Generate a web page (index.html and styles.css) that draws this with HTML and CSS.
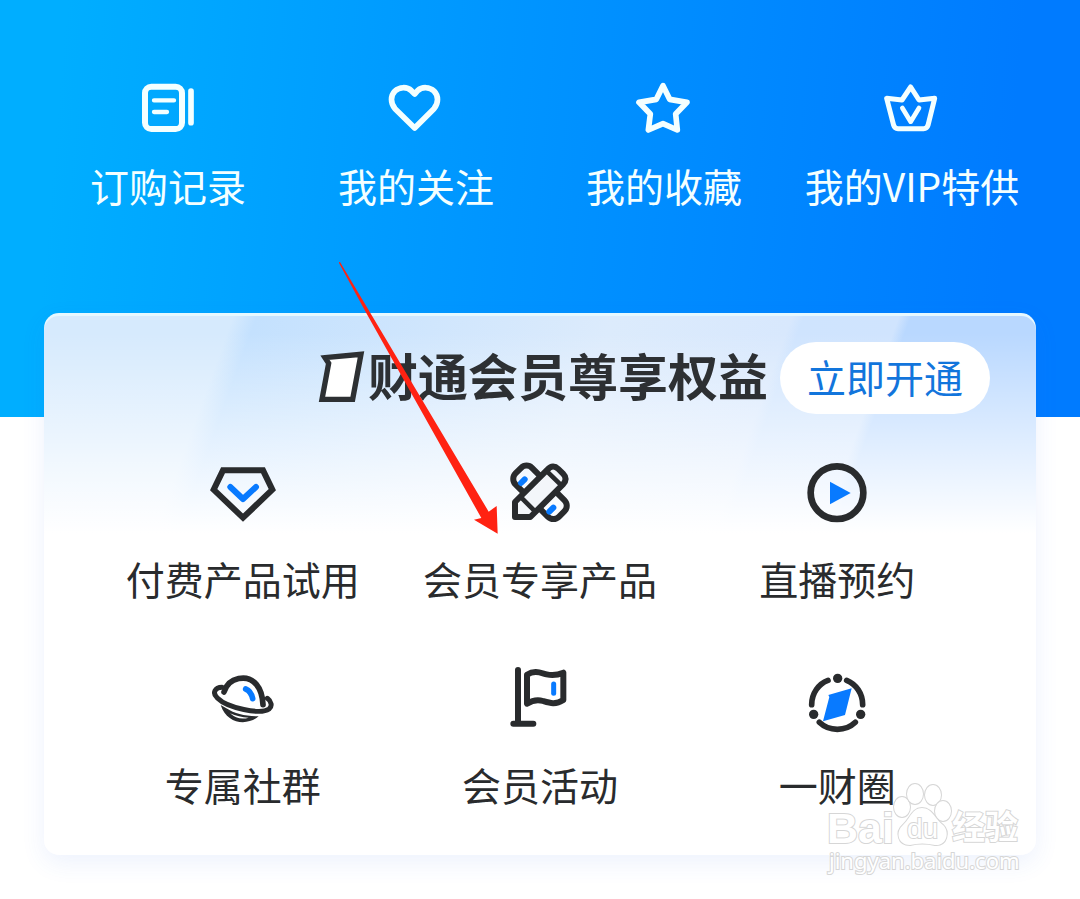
FILE: index.html
```html
<!DOCTYPE html>
<html lang="zh-CN">
<head>
<meta charset="utf-8">
<meta name="viewport" content="width=device-width, initial-scale=1">
<title>会员中心</title>
<link rel="stylesheet" href="styles.css">
</head>
<body>
<main class="page">
  <header class="hero">
    <nav class="shortcuts">
      <a class="shortcut" href="#orders">
        <svg class="shortcut-icon" viewBox="60 30 168 168" aria-hidden="true">
          <rect x="75" y="50" width="111" height="127" rx="19" stroke-width="18"/>
          <path d="M102 91H162M102 126H141" stroke-width="13"/>
          <path d="M213 63V158" stroke-width="17"/>
        </svg>
        <span>订购记录</span>
      </a>
      <a class="shortcut" href="#follows">
        <svg class="shortcut-icon" viewBox="804 30 168 168" aria-hidden="true">
          <path d="M884 72L874 62C860 49 838 51 825 63C811 77 811 100 825 116L884 174L942 116C956 100 956 77 942 63C929 51 907 49 893 62Z" stroke-width="17"/>
        </svg>
        <span>我的关注</span>
      </a>
      <a class="shortcut" href="#favorites">
        <svg class="shortcut-icon" viewBox="48 30 168 168" aria-hidden="true">
          <path d="M129 47L149 88L201 97L167 132L172 180L129 161L85 180L91 132L57 97L109 88Z" stroke-width="17"/>
        </svg>
        <span>我的收藏</span>
      </a>
      <a class="shortcut" href="#vip">
        <svg class="shortcut-icon" viewBox="792 30 168 168" aria-hidden="true">
          <path d="M872 51L897 90L944 85L924 166Q921 176 911 176H834Q824 176 821 166L800 85L846 90Z" stroke-width="15"/>
          <path d="M847 114L872 155L897 114" stroke-width="14"/>
        </svg>
        <span>我的VIP特供</span>
      </a>
    </nav>
  </header>

  <section class="card">
    <div class="card-head">
      <h1 class="card-title">
        <svg class="title-icon" viewBox="54 300 144 168" aria-hidden="true">
          <path d="M75 323L183 313L158 448H66L86 340Z" fill="#fff" stroke="#2d3033" stroke-width="16"/>
        </svg>
        <span class="title-text">财通会员尊享权益</span>
      </h1>
      <button class="open-button" type="button">立即开通</button>
    </div>
    <div class="benefits">
      <a class="benefit" href="#trial">
        <svg class="benefit-icon" viewBox="51 54 216 216" aria-hidden="true">
          <path class="dark" d="M99 91H219L247 149L159 233L71 149Z" stroke-width="18" stroke-linejoin="miter"/>
          <path class="blue" d="M121 141L159 177L198 141" stroke-width="18"/>
        </svg>
        <span>付费产品试用</span>
      </a>
      <a class="benefit" href="#exclusive">
        <svg class="benefit-icon" viewBox="42 54 216 216" aria-hidden="true">
          <g class="dark" stroke-width="18">
            <rect x="58" y="122" width="184" height="70" rx="23" transform="rotate(45 150 157)"/>
            <path fill="#f3f6fa" d="M75 231V186L173 88Q189 71 205 87L219 101Q235 117 219 133L121 231Z"/>
            <path d="M94 173L133 212M171 94L211 133" stroke-width="14"/>
          </g>
          <path class="blue" d="M93 129L104 118M178 215L190 203" stroke-width="18"/>
        </svg>
        <span>会员专享产品</span>
      </a>
      <a class="benefit" href="#live">
        <svg class="benefit-icon" viewBox="33 54 216 216" aria-hidden="true">
          <circle class="dark" cx="141" cy="158" r="79" stroke-width="20"/>
          <path d="M120 125L182 159L120 193Z" fill="#087aff"/>
        </svg>
        <span>直播预约</span>
      </a>
      <a class="benefit" href="#community">
        <svg class="benefit-icon" viewBox="51 27 216 216" aria-hidden="true">
          <path class="dark" d="M102 111C116 65 173 57 199 88Q217 109 219 149" stroke-width="17"/>
          <path class="dark" d="M96 97C76 97 65 113 82 129C112 159 212 180 237 162C248 153 244 139 232 130" stroke-width="15"/>
          <path d="M92 150L109 160C135 177 166 184 206 184C173 213 111 209 92 150Z" fill="#292b2d"/>
          <path d="M120 175Q146 187 176 188Q145 197 120 175Z" fill="#fff"/>
          <path class="blue" d="M167 102Q183 108 188 131" stroke-width="17"/>
        </svg>
        <span>专属社群</span>
      </a>
      <a class="benefit" href="#events">
        <svg class="benefit-icon" viewBox="42 27 216 216" aria-hidden="true">
          <path class="dark" d="M84 45V205M70 206H130" stroke-width="18"/>
          <path class="dark" d="M111 59C134 44 153 54 170 58Q194 64 220 53V135C197 150 179 144 159 138Q135 131 111 146Z" stroke-width="18"/>
          <path class="blue" d="M191 87V115" stroke-width="15"/>
        </svg>
        <span>会员活动</span>
      </a>
      <a class="benefit" href="#circle">
        <svg class="benefit-icon" viewBox="33 27 216 216" aria-hidden="true">
          <path class="dark" d="M65 149C65 115 86 86 114 76M170 76C199 88 218 116 218 149M88 202C117 230 167 230 196 202" stroke-width="17"/>
          <g fill="#292b2d"><circle cx="143" cy="70" r="14"/><circle cx="71" cy="178" r="14"/><circle cx="212" cy="178" r="14"/></g>
          <path d="M115 120L185 100L165 180L99 199L118 126Z" fill="#087aff"/>
        </svg>
        <span>一财圈</span>
      </a>
    </div>
    <svg class="watermark" viewBox="820 778 210 100" role="img" aria-label="Baidu 经验 jingyan.baidu.com">
      <g class="mark">
        <ellipse cx="902" cy="807" rx="8" ry="10"/>
        <ellipse cx="915" cy="794" rx="8" ry="10"/>
        <ellipse cx="933" cy="795" rx="8" ry="10"/>
        <ellipse cx="943" cy="811" rx="8" ry="10"/>
        <path d="M922 808C912 808 910 819 903 825C895 832 898 845 910 845Q922 842 935 845C947 846 950 832 943 825C935 819 932 808 922 808Z"/>
        <text class="mark-logo" x="827" y="843">Bai</text>
        <text class="mark-du" x="907" y="838">du</text>
        <text class="mark-cjk" x="952" y="839">经验</text>
        <text class="mark-url" x="829" y="869">jingyan.baidu.com</text>
      </g>
    </svg>
  </section>

  <svg class="pointer" viewBox="117 35 477 816" aria-hidden="true">
    <path d="M116 36L120 35L566 784L590 767L593 850L522 808L544 803L200 190Z" fill="#ff2212"/>
  </svg>
</main>
</body>
</html>
```
FILE: styles.css
```css
* { box-sizing: border-box; }

body {
  margin: 0;
  background: #fff;
  color: #292b2d;
  font-family: "Noto Sans CJK SC", sans-serif;
  font-size: 39px;
  line-height: 56px;
}

a { color: inherit; text-decoration: none; }

.page { position: relative; padding-bottom: 44px; }

.hero {
  padding: 80px 44px 204px;
  background: linear-gradient(95deg, #00aeff 6%, #0095ff 46%, #007bff 92%);
  color: #f4ffff;
}

.shortcuts { display: grid; grid-template-columns: repeat(4, 1fr); }

.shortcut, .benefit {
  display: flex;
  flex-direction: column;
  align-items: center;
  gap: 20px;
  white-space: nowrap;
}

.shortcut { gap: 21px; }

.shortcut-icon {
  width: 56px;
  height: 56px;
  fill: none;
  stroke: #f4ffff;
  stroke-linecap: round;
  stroke-linejoin: round;
}

.card {
  position: relative;
  margin: -104px 44px 0;
  padding: 29px 46px 40px;
  border-radius: 15px;
  background:
    linear-gradient(180deg, transparent 20px, #fff 220px),
    linear-gradient(110deg, #d6eafd 16%, #c4e1fe 18%, #dcebfc 48%, #d8e8fd 63%, #cfe4fe 64%, #d0e4fe 72%, #b9d8ff 73%);
  box-shadow: inset 0 3px 0 #e6f8ff, 0 8px 24px rgba(55, 110, 230, 0.09);
}

.card-head {
  display: flex;
  align-items: center;
  justify-content: flex-end;
  gap: 12px;
}

.card-title {
  display: flex;
  align-items: center;
  gap: 2px;
  margin: 0;
  color: #2d3033;
  font-size: 50px;
  font-weight: 700;
  line-height: 64px;
  white-space: nowrap;
}

.title-icon { width: 48px; height: 56px; }
.title-text { padding-bottom: 8px; }

.open-button {
  width: 210px;
  height: 72px;
  padding: 0 0 4px;
  border: 0;
  border-radius: 36px;
  background: #fff;
  color: #1275dc;
  font: inherit;
}

.benefits {
  display: grid;
  grid-template-columns: repeat(3, 1fr);
  row-gap: 58px;
  margin: 44px 4px 0;
  padding-bottom: 3px;
}

.benefit-icon {
  width: 72px;
  height: 72px;
  fill: none;
  stroke-linecap: round;
  stroke-linejoin: round;
}

.dark { stroke: #292b2d; }
.blue { stroke: #087aff; }

.watermark {
  position: absolute;
  right: 6px;
  bottom: -23px;
  width: 210px;
  height: 100px;
}

.mark {
  fill: #fff;
  stroke: #d6d6d6;
  stroke-width: 2px;
  paint-order: stroke;
  font-weight: 700;
}

.mark-logo { font-family: "Liberation Sans", sans-serif; font-size: 43px; }
.mark-du { font-family: "Liberation Sans", sans-serif; font-size: 28px; font-weight: 400; }
.mark-cjk { font-family: "Noto Sans CJK SC", sans-serif; font-size: 33px; }
.mark-url { font-family: "Noto Sans", sans-serif; font-size: 22px; font-weight: 400; }

.pointer {
  position: absolute;
  top: 262px;
  left: 339px;
  width: 159px;
  height: 272px;
}
```
